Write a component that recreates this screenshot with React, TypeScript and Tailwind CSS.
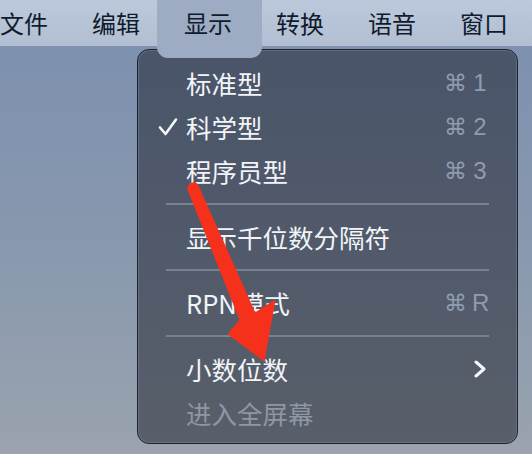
import React from "react";

const CJK = '"Noto Sans CJK SC", "Noto Sans", sans-serif';

const menuBar = ["文件", "编辑", "显示", "转换", "语音", "窗口"];

type Item =
  | { kind: "row"; label: string; key?: string; checked?: boolean; submenu?: boolean; disabled?: boolean }
  | { kind: "sep" };

const items: Item[] = [
  { kind: "row", label: "标准型", key: "1" },
  { kind: "row", label: "科学型", key: "2", checked: true },
  { kind: "row", label: "程序员型", key: "3" },
  { kind: "sep" },
  { kind: "row", label: "显示千位数分隔符" },
  { kind: "sep" },
  { kind: "row", label: "RPN 模式", key: "R" },
  { kind: "sep" },
  { kind: "row", label: "小数位数", submenu: true },
  { kind: "row", label: "进入全屏幕", disabled: true },
];

function Check() {
  return (
    <svg width="20" height="20" viewBox="0 0 20 20" className="block">
      <polyline
        points="2,10.5 7.5,17 18,2.5"
        fill="none"
        stroke="#f4f6f9"
        strokeWidth="2.6"
        strokeLinecap="round"
        strokeLinejoin="round"
      />
    </svg>
  );
}

function Chevron() {
  return (
    <svg width="14" height="18" viewBox="0 0 14 18" className="block">
      <polyline
        points="3,2 11,9 3,16"
        fill="none"
        stroke="#f4f6f9"
        strokeWidth="3"
        strokeLinecap="round"
        strokeLinejoin="round"
      />
    </svg>
  );
}

export default function App() {
  return (
    <div
      className="relative w-[532px] h-[454px] overflow-hidden flex flex-col bg-gradient-to-b from-[#7b8fae] via-[#8797ae] to-[#9aa3ae]"
      style={{ fontFamily: CJK }}
    >
      {/* top menu bar */}
      <div className="h-[46px] shrink-0 bg-gradient-to-b from-[#bcc8dc] to-[#b2bfd3] flex items-center gap-[44px] text-[24px] leading-none text-[#101b2d]">
        {menuBar.map((m) => (
          <span key={m} className="relative whitespace-nowrap">
            {m === "显示" && (
              <span className="absolute left-[-27px] right-[-30px] top-[-23px] bottom-[-23px] rounded-[11px] bg-[#9dabc3]" />
            )}
            <span className="relative">{m}</span>
          </span>
        ))}
      </div>

      {/* dropdown panel */}
      <div className="ml-[137px] mt-[3px] w-[381px] h-[395px] rounded-[12px] border border-[#1b2232] bg-gradient-to-b from-[#4a556a] to-[#585f6a] shadow-[inset_0_0_0_1px_rgba(140,150,168,0.35)] pt-[11px] flex flex-col">
        {items.map((it, i) =>
          it.kind === "sep" ? (
            <div key={i} className="h-[22px] flex items-center px-[28px]">
              <div className="h-[1.5px] w-full bg-[#78818f]" />
            </div>
          ) : (
            <div key={i} className="h-[44px] flex items-center pr-[29px]">
              <div className="w-[48px] pl-[20px] flex items-center">{it.checked && <Check />}</div>
              <div
                className={
                  "flex-1 text-[25.5px] leading-none whitespace-nowrap " +
                  (it.disabled ? "text-[#8e97a4]" : "text-[#f2f4f8]")
                }
              >
                {it.label === "RPN 模式" ? (
                  <span>
                    RPN<span className="ml-[2px]">模式</span>
                  </span>
                ) : (
                  it.label
                )}
              </div>
              {it.key && (
                <div
                  className="flex items-center gap-[5px] text-[#8f9bb0] text-[24px] leading-none"
                  style={{ fontFamily: '"Liberation Sans", "DejaVu Sans", sans-serif' }}
                >
                  <span className="text-[23px]" style={{ fontFamily: '"DejaVu Sans", sans-serif' }}>
                    ⌘
                  </span>
                  <span className="w-[16px] text-center">{it.key}</span>
                </div>
              )}
              {it.submenu && (
                <div className="pr-[1px]">
                  <Chevron />
                </div>
              )}
            </div>
          )
        )}
      </div>

      {/* red annotation arrow drawn over the menu */}
      <svg className="absolute inset-0 pointer-events-none" width="532" height="454" viewBox="0 0 532 454">
        <polygon
          points="187.5,188.5 190,183.5 195,182.5 197.5,184.5 255,313 275,300 264,361 228,334 240,320"
          fill="#f5311c"
          stroke="#f5311c"
          strokeWidth="1"
          strokeLinejoin="round"
        />
      </svg>
    </div>
  );
}
